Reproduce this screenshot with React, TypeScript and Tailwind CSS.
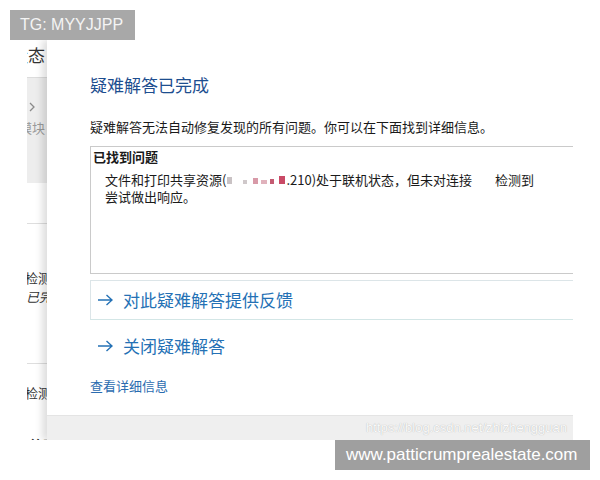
const cjk = "font-['Noto_Sans_CJK_SC',sans-serif]";

function Arrow() {
  return (
    <svg width="16" height="12" viewBox="0 0 16 12" fill="none" className="shrink-0">
      <path d="M1 6H15M9.5 1L15 6L9.5 11" stroke="#2471b5" strokeWidth="1.4" />
    </svg>
  );
}

function Redacted() {
  return (
    <svg width="60" height="10" viewBox="0 0 60 10" className="inline-block align-[-1px]">
      <rect x="1" y="1" width="5" height="7" fill="#c9c2c4" />
      <rect x="17" y="4" width="4" height="4" fill="#cfc8ca" />
      <rect x="27" y="2" width="5" height="6" fill="#d89aa8" />
      <rect x="35" y="4" width="6" height="4" fill="#e0b2bc" />
      <rect x="44" y="3" width="4" height="5" fill="#c45b72" />
      <rect x="53" y="0" width="6" height="8" fill="#c94a66" />
    </svg>
  );
}

function SidePanel() {
  return (
    <aside className="flex w-[20px] shrink-0 flex-col overflow-hidden bg-white text-[#333]">
      <div className="mt-[4px] flex h-[22px] shrink-0 justify-end whitespace-nowrap pr-[2px] text-[17px] leading-[22px]">
        连接状态
      </div>
      <div className="mt-[11px] flex h-[106px] shrink-0 flex-col border-t border-[#dcdcdc] bg-[#ededed]">
        <svg width="6" height="10" viewBox="0 0 6 10" fill="none" className="ml-[2px] mt-[24px] shrink-0">
          <path d="M1 1L5 5L1 9" stroke="#8a8a8a" strokeWidth="1.3" />
        </svg>
        <div className="mt-[8px] flex shrink-0 justify-end whitespace-nowrap pr-[2px] text-[13px] leading-[16px] text-[#9a9a9a]">
          网络模块
        </div>
      </div>
      <div className="mt-[40px] h-px shrink-0 bg-[#dedede]" />
      <div className="ml-[-2px] mt-[45px] shrink-0 whitespace-nowrap text-[13px] leading-[18px]">检测到的问题</div>
      <div className="ml-[-1px] mt-px shrink-0 whitespace-nowrap text-[13px] italic leading-[18px]">已完成</div>
      <div className="mt-[57px] h-px shrink-0 bg-[#dedede]" />
      <div className="ml-[-2px] mt-[20px] shrink-0 whitespace-nowrap text-[13px] leading-[18px]">检测到的问题</div>
      <div className="ml-[3px] mt-[34px] shrink-0 whitespace-nowrap text-[13px] font-bold leading-[18px]">策略</div>
    </aside>
  );
}

export default function App() {
  return (
    <div className={`relative h-[480px] w-[600px] overflow-hidden bg-white ${cjk}`}>
      <div className="ml-[27px] mt-[40px] flex h-[400px] w-[546px] overflow-hidden">
        <SidePanel />

        <section className="relative z-10 flex w-[526px] flex-col bg-white shadow-[-5px_0_7px_rgba(0,0,0,0.13)]">
          <div className="flex-1 overflow-hidden pl-[43px] pt-[33px]">
            <h1 className="text-[17px] leading-[24px] text-[#1d4e8f]">疑难解答已完成</h1>
            <p className="mt-[21px] text-[13px] leading-[18px] text-[#1a1a1a]">
              疑难解答无法自动修复发现的所有问题。你可以在下面找到详细信息。
            </p>

            <div className="mt-[10px] h-[128px] border border-r-0 border-[#cacaca] pl-[2px] pt-px text-[#1a1a1a]">
              <h2 className="text-[13px] font-bold leading-[17px]">已找到问题</h2>
              <p className="ml-[12px] mt-[6px] whitespace-nowrap text-[13px] leading-[17px]">
                文件和打印共享资源(
                <Redacted />
                .210)处于联机状态，但未对连接
                <span className="inline-block w-[23px]" />
                检测到
                <br />
                尝试做出响应。
              </p>
            </div>

            <div className="mt-[6px] flex h-[40px] items-center border border-r-0 border-[#dce5e8] border-b-[#d3e6e6] pl-[6px] text-[17px] text-[#2471b5]">
              <Arrow />
              <span className="ml-[10px] leading-[24px]">对此疑难解答提供反馈</span>
            </div>

            <div className="mt-[6px] flex h-[40px] items-center pl-[7px] text-[17px] text-[#2471b5]">
              <Arrow />
              <span className="ml-[10px] leading-[24px]">关闭疑难解答</span>
            </div>

            <div className="mt-[11px] text-[13px] leading-[18px] text-[#2b6cb0]">查看详细信息</div>
          </div>

          <footer className="flex h-[25px] shrink-0 items-center justify-end border-t border-[#e4e4e4] bg-[#efefef] pr-[6px] font-['Liberation_Sans',sans-serif] text-[13px] text-[#fafafa] [text-shadow:0_0_1px_rgba(0,0,0,0.3)]">
            https://blog.csdn.net/zhizhengguan
          </footer>
        </section>
      </div>

      <div className="absolute left-[10px] top-[10px] flex h-[30px] w-[125px] items-center bg-[#a8a8a8] pl-[10px] font-['Liberation_Sans',sans-serif] text-[16px] text-[#f4f4f4]">
        TG: MYYJJPP
      </div>

      <div className="absolute left-[335px] top-[440px] flex h-[30px] w-[255px] items-center bg-[#9f9f9f] pl-[11px] font-['Liberation_Sans',sans-serif] text-[17px] text-white">
        www.patticrumprealestate.com
      </div>
    </div>
  );
}
